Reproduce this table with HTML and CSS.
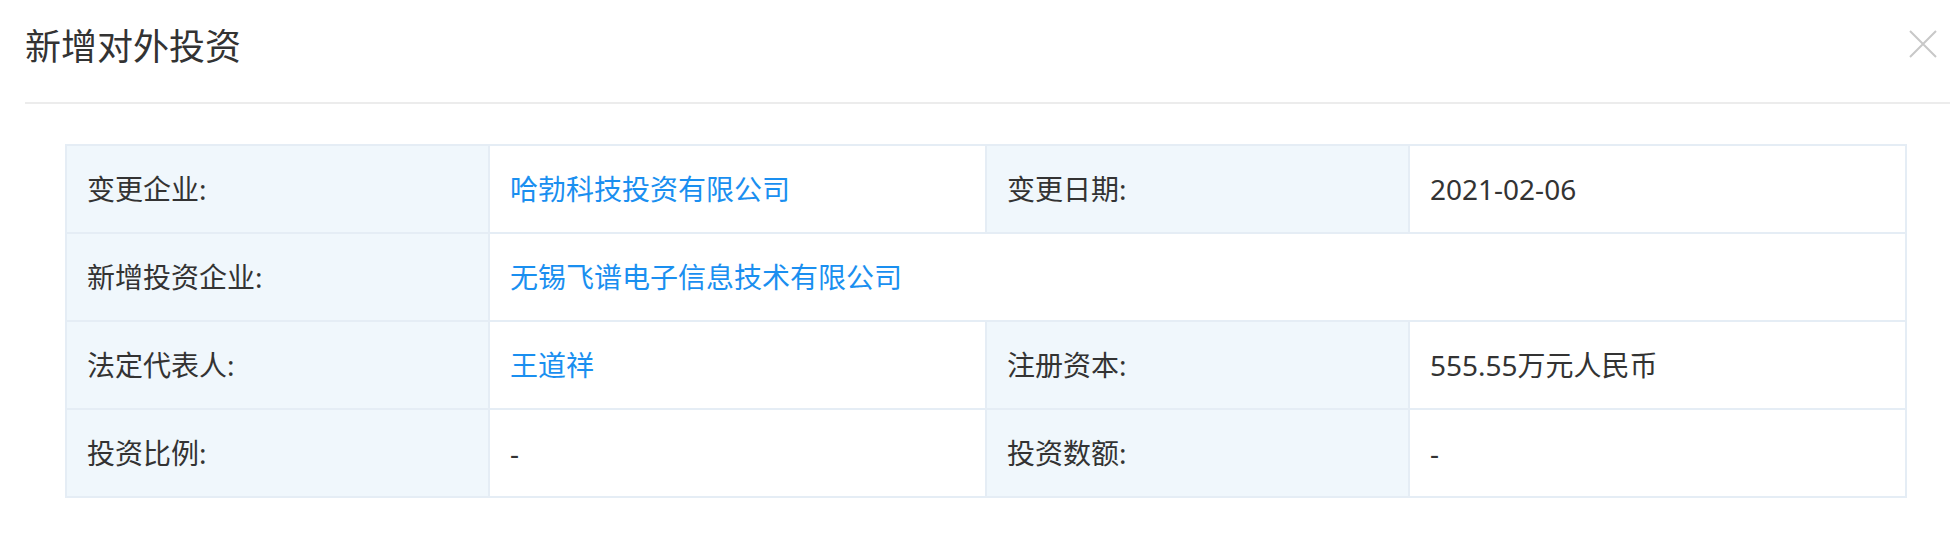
FILE: index.html
```html
<!DOCTYPE html>
<html lang="zh-CN">
<head>
<meta charset="utf-8">
<title>新增对外投资</title>
<link rel="stylesheet" href="styles.css">
</head>
<body>
<div class="modal">
  <div class="modal-header">
    <h1 class="modal-title">新增对外投资</h1>
    <span class="modal-close" aria-label="关闭">
      <svg width="28" height="28" viewBox="0 0 28 28"><path d="M1 1 L27 27 M27 1 L1 27" stroke="#c8c8c8" stroke-width="2" fill="none"/></svg>
    </span>
  </div>
  <table class="detail">
    <colgroup>
      <col class="c-label"><col class="c-value"><col class="c-label"><col class="c-value">
    </colgroup>
    <tr>
      <td class="label">变更企业:</td>
      <td class="value"><a class="link">哈勃科技投资有限公司</a></td>
      <td class="label">变更日期:</td>
      <td class="value">2021-02-06</td>
    </tr>
    <tr>
      <td class="label">新增投资企业:</td>
      <td class="value" colspan="3"><a class="link">无锡飞谱电子信息技术有限公司</a></td>
    </tr>
    <tr>
      <td class="label">法定代表人:</td>
      <td class="value"><a class="link">王道祥</a></td>
      <td class="label">注册资本:</td>
      <td class="value">555.55万元人民币</td>
    </tr>
    <tr>
      <td class="label">投资比例:</td>
      <td class="value">-</td>
      <td class="label">投资数额:</td>
      <td class="value">-</td>
    </tr>
  </table>
</div>
</body>
</html>
```
FILE: styles.css
```css
html, body {
  margin: 0;
  padding: 0;
  background: #ffffff;
}
body {
  font-family: "Noto Sans", "Noto Sans CJK SC", sans-serif;
  color: #333333;
}
.modal {
  padding-left: 25px;
}
.modal-header {
  display: flex;
  align-items: center;
  justify-content: space-between;
  padding-top: 26px;
  padding-bottom: 40px;
  border-bottom: 2px solid #ececec;
}
.modal-title {
  margin: 0;
  font-family: "Noto Sans CJK SC", sans-serif;
  font-size: 36px;
  line-height: 36px;
  font-weight: 400;
  color: #333333;
}
.modal-close {
  display: flex;
  width: 28px;
  height: 28px;
  margin-right: 13px;
}
.detail {
  margin: 40px 0 0 40px;
  border-collapse: collapse;
  table-layout: fixed;
  width: 1840px;
  font-size: 28px;
  line-height: 36px;
}
.c-label { width: 423px; }
.c-value { width: 497px; }
.detail td {
  height: 86px;
  padding: 0 20px;
  border: 2px solid #e5edf5;
  vertical-align: middle;
  white-space: nowrap;
}
.detail .label {
  background: #f0f7fc;
  color: #333333;
}
.detail .value {
  background: #ffffff;
  color: #333333;
}
.link {
  color: #1a8ff0;
  text-decoration: none;
  cursor: pointer;
}
```
